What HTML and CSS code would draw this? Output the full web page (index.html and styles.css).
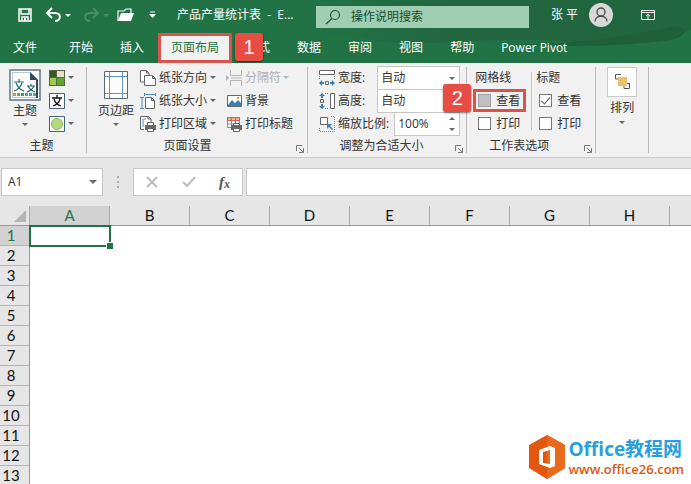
FILE: index.html
```html
<!DOCTYPE html>
<html lang="zh-CN">
<head>
  <meta charset="UTF-8">
  <meta name="viewport" content="width=device-width, initial-scale=1.0">
  <title>产品产量统计表 - Excel</title>
  <link rel="stylesheet" href="styles.css">
</head>
<body>
  <header class="app-header">
    <svg class="swirl" viewBox="0 0 400 63" preserveAspectRatio="none" aria-hidden="true">
      <defs>
        <linearGradient id="shade" x1="0" x2="1"><stop offset="0" stop-color="#217346"/><stop offset=".4" stop-color="#22663f"/><stop offset="1" stop-color="#22663f"/></linearGradient>
      </defs>
      <path d="M20 0H400V30C350 50 300 42 250 40C180 38 130 48 80 40C20 30 0 38 20 0Z" fill="url(#shade)"/>
      <path d="M180 40C240 50 320 40 380 27C396 24 400 36 380 40C320 48 240 48 180 40Z" fill="#1f6039"/>
    </svg>
    <div class="title-bar">
      <div class="quick-access">
        <button type="button" class="save" aria-label="保存">
          <svg width="16" height="16" viewBox="0 0 16 16"><path d="M2 2h12v12H2zM4 2v5h8V2M5 14v-4h6v4" fill="none" stroke="#fff" stroke-width="1.5"/><path d="M7 11h2v3H7z" fill="#fff"/></svg>
        </button>
        <button type="button" class="undo" aria-label="撤消">
          <svg width="17" height="16" viewBox="0 0 17 16"><path d="M7 1L2 6l5 5M3 6h7c7 0 6 8 0 8" fill="none" stroke="#fff" stroke-width="2"/></svg>
          <i class="caret light"></i>
        </button>
        <button type="button" class="redo" aria-label="恢复" disabled>
          <svg width="17" height="16" viewBox="0 0 17 16"><path d="M10 1l5 5-5 5M14 6H7c-7 0-6 8 0 8" fill="none" stroke="#4c8c68" stroke-width="2"/></svg>
          <i class="caret dim"></i>
        </button>
        <button type="button" class="open" aria-label="打开">
          <svg width="17" height="16" viewBox="0 0 17 16"><path d="M1 14V4h6l2-2h5v4" fill="none" stroke="#fff" stroke-width="1.2"/><path d="M1 14L4 6h13l-3 8z" fill="#fff"/></svg>
        </button>
        <button type="button" class="customize" aria-label="自定义快速访问工具栏">
          <svg width="7" height="8" viewBox="0 0 7 8"><path d="M1 1h5" stroke="#fff"/><path d="M0 3h7L3.500 7z" fill="#fff"/></svg>
        </button>
      </div>
      <div class="doc-title">产品产量统计表 &nbsp;- &nbsp;E...</div>
      <label class="search">
        <svg width="16" height="16" viewBox="0 0 16 16"><circle cx="10" cy="6" r="4.500" fill="none" stroke="#1d5c37" stroke-width="1.200"/><path d="M7 9.500L1 15" stroke="#1d5c37" stroke-width="1.300"/></svg>
        <input type="text" placeholder="操作说明搜索" aria-label="操作说明搜索">
      </label>
      <div class="user-name">张 平</div>
      <button type="button" class="avatar" aria-label="帐户">
        <svg width="24" height="24" viewBox="0 0 24 24"><circle cx="12" cy="12" r="12" fill="#d9d9d9"/><circle cx="12" cy="9" r="4" fill="none" stroke="#4a4a4a" stroke-width="1.300"/><path d="M6 18.500c0-7 12-7 12 0" fill="none" stroke="#4a4a4a" stroke-width="1.300"/></svg>
      </button>
      <button type="button" aria-label="功能区显示选项">
        <svg width="14" height="12" viewBox="0 0 14 12"><path d="M.5 1.500h13v9H.5zM.5 3.500h13M7 10V5M5 7l2-2 2 2" fill="none" stroke="#fff"/></svg>
      </button>
    </div>
    <nav class="tabs">
      <a href="#" class="file">文件</a>
      <a href="#">开始</a>
      <a href="#">插入</a>
      <a href="#" class="active">页面布局<span class="badge badge-one">1</span></a>
      <a href="#">公式</a>
      <a href="#">数据</a>
      <a href="#">审阅</a>
      <a href="#">视图</a>
      <a href="#">帮助</a>
      <a href="#">Power Pivot</a>
    </nav>
  </header>

  <div class="ribbon">
    <section class="group themes">
      <div class="group-body">
        <button type="button" class="big">
          <svg width="32" height="32" viewBox="0 0 32 32"><path d="M1 1h30v30H1z" fill="#fff" stroke="#5f7686" stroke-width="1.500"/><path d="M3.500 3.500h18l7 7v18h-25z" fill="#fff" stroke="#bcc5cc"/><path d="M21 3l8 8v18h-2V11h-6z" fill="#35475a"/><path d="M5 13h10M10 10v3M7 14c2 5 5 7 8 8M13 14c-2 5-4 7-8 8M18 17h8M22 15v2M19 17c2 4 4 5 7 6M25 17c-2 4-4 5-7 6" fill="none" stroke="#1f6d63" stroke-width="1.200"/><path d="M4 24h3v3H4z" fill="#c29b42"/><path d="M8 24h3v3H8z" fill="#78a23c"/><path d="M12 24h3v3h-3z" fill="#4d9a48"/><path d="M16 24h3v3h-3zM20 24h3v3h-3zM24 24h3v3h-3z" fill="#49a5a7"/></svg>
          <span>主题</span>
          <i class="caret"></i>
        </button>
        <div class="stack">
          <button type="button" aria-label="颜色"><svg width="16" height="16" viewBox="0 0 16 16"><path d="M0 0h16v16H0z" fill="#56683f"/><path d="M1 1h6v6H1z" fill="#375623"/><path d="M8 1h7v6H8z" fill="#e6dfd0"/><path d="M1 8h6v7H1z" fill="#9bcb4c"/><path d="M8 8h7v7H8z" fill="#5fa52b"/></svg><i class="caret"></i></button>
          <button type="button" aria-label="字体"><svg width="16" height="16" viewBox="0 0 16 16"><path d="M.5.5h15v15H.5z" fill="#fff" stroke="#44617a"/><path d="M3 5h10M8 2v3M5 6c1 4 4 6 7 7M11 6c-1 4-4 6-7 7" fill="none" stroke="#111" stroke-width="1.300"/></svg><i class="caret"></i></button>
          <button type="button" aria-label="效果"><svg width="16" height="16" viewBox="0 0 16 16"><path d="M.5.5h15v15H.5z" fill="#fff" stroke="#44617a"/><circle cx="8" cy="8" r="5.500" fill="#b4d884" stroke="#8cba5a"/></svg><i class="caret"></i></button>
        </div>
      </div>
      <h2>主题</h2>
    </section>

    <section class="group page-setup">
      <div class="group-body">
        <button type="button" class="big">
          <svg width="24" height="32" viewBox="0 0 24 32"><path d="M.5 2.500h23v27H.5z" fill="#fff" stroke="#5a6670"/><path d="M5.500 3v26M18.500 3v26M1 7.500h22M1 24.500h22" stroke="#5b97cd"/></svg>
          <span>页边距</span>
          <i class="caret"></i>
        </button>
        <div class="stack">
          <button type="button"><svg width="16" height="16" viewBox="0 0 16 16"><path d="M6 12H.5V.5h6L9 3v2M6.500.5V3H9" fill="#fff" stroke="#666"/><path d="M4.500 5.500h8l3 3v7h-11zM12.500 5.500v3h3" fill="#fff" stroke="#666"/></svg><span>纸张方向</span><i class="caret"></i></button>
          <button type="button"><svg width="16" height="16" viewBox="0 0 16 16"><path d="M5.500 4.500h6l3 3v8h-9zM11.500 4.500v3h3" fill="#fff" stroke="#666"/><path d="M2 4v11M0 4.500h4M0 15.500h4M5 1.500h10M4.500 0v3M15.500 0v3" stroke="#4a8ac4"/></svg><span>纸张大小</span><i class="caret"></i></button>
          <button type="button"><svg width="16" height="16" viewBox="0 0 16 16"><path d="M4 13.500H.5V.5h8L11 3v3M8 .5V3h3" fill="#fff" stroke="#666"/><path d="M3 3v8M3.500 3H6" stroke="#4a8ac4"/><path d="M5 9h11v5H5z" fill="#666"/><path d="M7.500 6.500h6v3h-6zM7.500 12.500h6v3h-6z" fill="#fff" stroke="#666"/></svg><span>打印区域</span><i class="caret"></i></button>
        </div>
        <div class="stack second">
          <button type="button" disabled><svg width="17" height="16" viewBox="0 0 17 16"><path d="M4.500 0v5.500h11V0M4.500 16v-5.500h11V16M5 8h11" fill="none" stroke="#b5b5b5"/><path d="M0 5l3 3-3 3z" fill="#b5b5b5"/></svg><span>分隔符</span><i class="caret dim"></i></button>
          <button type="button"><svg width="17" height="16" viewBox="0 0 17 16"><path d="M1.500 2.500h14v11h-14z" fill="#fff" stroke="#666"/><path d="M2 12l4-5 3 3 3-3 3 3v3H2z" fill="#3f7fae"/><path d="M11 4h2v2h-2z" fill="#e5a44a"/></svg><span>背景</span></button>
          <button type="button"><svg width="17" height="16" viewBox="0 0 17 16"><path d="M1.500 1.500h12v10h-12zM5.500 2v9M9.500 2v9M2 8h11" fill="#fff" stroke="#888"/><path d="M1 1h13v4H1z" fill="#d2624c"/><path d="M2 3h3M6 3h3M10 3h3" stroke="#fff"/><path d="M5 9h11v5H5z" fill="#666"/><path d="M7.500 7.500h6v2h-6zM7.500 12.500h6v3h-6z" fill="#fff" stroke="#666"/></svg><span>打印标题</span></button>
        </div>
      </div>
      <h2>页面设置</h2>
      <button type="button" class="launcher" aria-label="页面设置选项"><svg width="8" height="8" viewBox="0 0 8 8"><path d="M.5 6V.5H6M3 3l4 4M7.500 3v4.500H3" fill="none" stroke="#777"/></svg></button>
    </section>

    <section class="group scale">
      <div class="group-body">
        <div class="stack">
          <div class="field">
            <svg width="16" height="16" viewBox="0 0 16 16"><path d="M.5.5h15v4H.5z" fill="#fff" stroke="#666"/><path d="M.5 6v4M15.500 6v4" stroke="#888" stroke-dasharray="1 1"/><path d="M0 13l3-3v2h2v2H3v2zM16 13l-3-3v2h-2v2h2v2z" fill="#3f7fae"/><path d="M6.500 11.500h3v3h-3z" fill="#fff" stroke="#666"/></svg>
            <label for="width">宽度:</label>
            <span class="combo"><select id="width"><option>自动</option></select><i class="caret"></i></span>
          </div>
          <div class="field">
            <svg width="16" height="16" viewBox="0 0 16 16"><path d="M11.500.5h4v15h-4z" fill="#fff" stroke="#666"/><path d="M6 .5h4M6 15.500h4" stroke="#888" stroke-dasharray="1 1"/><path d="M3 0l3 3H4v2H2V3H0zM3 16l3-3H4v-2H2v2H0z" fill="#3f7fae"/><path d="M1.500 6.500h3v3h-3z" fill="#fff" stroke="#666"/></svg>
            <label for="height">高度:</label>
            <span class="combo"><select id="height"><option>自动</option></select><i class="caret"></i></span>
          </div>
          <div class="field">
            <svg width="16" height="16" viewBox="0 0 16 16"><path d="M1.500 1.500h7v7h-7z" fill="#fff" stroke="#666"/><path d="M12 .5h3.500v15H.5V11" fill="none" stroke="#888" stroke-dasharray="1 1"/><path d="M8 8h5l-2 2 3 3-1 1-3-3-2 2z" fill="#3f7fae"/></svg>
            <label for="zoom">缩放比例:</label>
            <span class="spin"><input id="zoom" type="text" value="100%"><i class="caret up"></i><i class="caret"></i></span>
          </div>
        </div>
      </div>
      <h2>调整为合适大小</h2>
      <button type="button" class="launcher" aria-label="调整选项"><svg width="8" height="8" viewBox="0 0 8 8"><path d="M.5 6V.5H6M3 3l4 4M7.500 3v4.500H3" fill="none" stroke="#777"/></svg></button>
    </section>

    <section class="group sheet-options">
      <div class="group-body">
        <div class="stack">
          <h3>网格线</h3>
          <div class="marked">
            <label class="check"><input type="checkbox" class="pressed">查看</label>
            <span class="badge badge-two">2</span>
          </div>
          <label class="check"><input type="checkbox">打印</label>
        </div>
        <div class="stack headings">
          <h3>标题</h3>
          <label class="check"><input type="checkbox" checked>查看</label>
          <label class="check"><input type="checkbox">打印</label>
        </div>
      </div>
      <h2>工作表选项</h2>
      <button type="button" class="launcher" aria-label="工作表选项"><svg width="8" height="8" viewBox="0 0 8 8"><path d="M.5 6V.5H6M3 3l4 4M7.500 3v4.500H3" fill="none" stroke="#777"/></svg></button>
    </section>

    <section class="group arrange">
      <button type="button" class="big">
        <svg width="30" height="30" viewBox="0 0 30 30"><path d="M.5.5h29v29H.5z" fill="#fff" stroke="#c9c9c9"/><path d="M8.500 12V7.500H14M8.500 12H11M22.500 16v5.500H17M20 16.500h2.500M17 19v2.500" fill="none" stroke="#555"/><path d="M11 10h9v9h-9z" fill="#ecc069"/></svg>
        <span>排列</span>
        <i class="caret"></i>
      </button>
    </section>
  </div>

  <div class="formula-bar">
    <div class="name-box">
      <input type="text" value="A1" aria-label="名称框">
      <i class="caret"></i>
    </div>
    <svg class="grip" width="3" height="12" viewBox="0 0 3 12"><path d="M0 0h2v2H0zM0 5h2v2H0zM0 10h2v2H0z" fill="#aaa"/></svg>
    <div class="formula-buttons">
      <button type="button" aria-label="取消"><svg width="12" height="12" viewBox="0 0 12 12"><path d="M1 1l10 10M11 1L1 11" stroke="#bdbdbd" stroke-width="2"/></svg></button>
      <button type="button" aria-label="输入"><svg width="14" height="12" viewBox="0 0 14 12"><path d="M1 6l4 4 8-9" fill="none" stroke="#bdbdbd" stroke-width="2"/></svg></button>
      <button type="button" class="fx">f<small>x</small></button>
    </div>
    <input type="text" class="formula" aria-label="编辑栏">
  </div>

  <main class="sheet">
    <table>
      <colgroup>
        <col class="row-col"><col class="data-col"><col class="data-col"><col class="data-col"><col class="data-col"><col class="data-col"><col class="data-col"><col class="data-col"><col class="data-col"><col>
      </colgroup>
      <thead>
        <tr>
          <th class="corner"><svg width="12" height="12" viewBox="0 0 12 12"><path d="M12 0v12H0z" fill="#b4b4b4"/></svg></th>
          <th class="selected">A</th><th>B</th><th>C</th><th>D</th><th>E</th><th>F</th><th>G</th><th>H</th><th class="last"></th>
        </tr>
      </thead>
      <tbody>
        <tr><th class="selected">1</th><td class="cell-active"></td><td colspan="8"></td></tr>
        <tr><th>2</th><td colspan="9"></td></tr>
        <tr><th>3</th><td colspan="9"></td></tr>
        <tr><th>4</th><td colspan="9"></td></tr>
        <tr><th>5</th><td colspan="9"></td></tr>
        <tr><th>6</th><td colspan="9"></td></tr>
        <tr><th>7</th><td colspan="9"></td></tr>
        <tr><th>8</th><td colspan="9"></td></tr>
        <tr><th>9</th><td colspan="9"></td></tr>
        <tr><th>10</th><td colspan="9"></td></tr>
        <tr><th>11</th><td colspan="9"></td></tr>
        <tr><th>12</th><td colspan="9"></td></tr>
        <tr><th>13</th><td colspan="9"></td></tr>
      </tbody>
    </table>
  </main>

  <div class="watermark">
    <svg width="36" height="44" viewBox="0 0 36 44"><path d="M18 0l18 10v23L18 44 0 33V10z" fill="#e2560d"/><path d="M18 0l18 10v23L18 44z" fill="#ea6a1c"/><path d="M10 15l11-4 5 2v18l-5 2-11-4zM14 17v11l7 1V15z" fill="#fff" fill-rule="evenodd"/></svg>
    <div>
      <strong>Office教程网</strong>
      <a href="#">www.office26.com</a>
    </div>
  </div>
</body>
</html>
```
FILE: styles.css
```css
* {
  box-sizing: border-box;
}
body {
  margin: 0;
  height: 100vh;
  display: flex;
  flex-direction: column;
  overflow: hidden;
  position: relative;
  background-color: #fff;
  color: #333;
  font: 12px/16px "Open Sans", "Noto Sans CJK SC", sans-serif;
}
button, input, select {
  font: inherit;
  color: inherit;
  margin: 0;
  padding: 0;
  border: none;
  border-radius: 0;
  background: none;
}
button {
  display: flex;
  align-items: center;
}
svg {
  display: block;
  flex: none;
}
h2, h3 {
  margin: 0;
  font-size: 12px;
  font-weight: normal;
}
.caret {
  flex: none;
  border: 3px solid transparent;
  border-top-color: #666;
  border-bottom: none;
}
.caret.light {
  border-top-color: #fff;
}
.caret.dim {
  border-top-color: #b5b5b5;
}
.caret.up {
  border-top: none;
  border-bottom: 3px solid #666;
}

/* title bar and tabs */
.app-header {
  position: relative;
  flex: none;
  background-color: #217346;
  color: #fff;
}
.swirl {
  position: absolute;
  right: 0;
  top: 0;
  width: 58%;
  height: 100%;
}
.title-bar {
  position: relative;
  display: flex;
  align-items: center;
  height: 33px;
  padding: 0 36px 3px 17px;
}
.quick-access {
  display: flex;
  align-items: center;
  margin-right: 21px;
}
.quick-access button {
  gap: 3px;
}
.save, .undo {
  margin-right: 12px;
}
.redo {
  margin-right: 8px;
}
.redo .caret {
  border-top-color: #4c8c68;
}
.open {
  margin-right: 15px;
}
.doc-title {
  width: 139px;
  white-space: nowrap;
}
.search {
  flex: 1;
  display: flex;
  align-items: center;
  gap: 10px;
  height: 22px;
  margin: 3px 22px 0 0;
  padding-left: 9px;
  background-color: #9fceb2;
}
.search input {
  flex: 1;
  min-width: 0;
}
.search input::placeholder {
  color: #174d2e;
  opacity: 1;
}
.avatar {
  margin: 0 28px 0 11px;
}
.tabs {
  position: relative;
  display: flex;
  align-items: center;
  gap: 27px;
  height: 30px;
  padding-left: 13px;
}
.tabs a {
  color: #fff;
  text-decoration: none;
  white-space: nowrap;
}
.tabs .file {
  margin-right: 5px;
}
.tabs .active {
  position: relative;
  height: 30px;
  margin: 0 -13px;
  padding: 4px 10px;
  border: 3px solid #d9534a;
  background-color: #f1f1f1;
  color: #217346;
}
.badge {
  position: absolute;
  z-index: 2;
  width: 28px;
  height: 28px;
  border-radius: 3px;
  background-color: #e84c42;
  box-shadow: 0 1px 2px rgba(0, 0, 0, 0.5);
  color: #fff;
  font: 20px/28px "Liberation Sans", sans-serif;
  text-align: center;
}
.badge-one {
  left: 74px;
  top: -3px;
}
.badge-two {
  right: 55px;
  top: -5px;
}

/* ribbon */
.ribbon {
  flex: none;
  display: flex;
  background-color: #f1f1f1;
  border-bottom: 1px solid #c8c8c8;
}
.group {
  position: relative;
  padding: 3px 0 2px;
}
.group::after {
  content: "";
  position: absolute;
  right: 0;
  top: 4px;
  bottom: 4px;
  border-right: 1px solid #b8b8b8;
}
.group-body {
  display: flex;
  height: 69px;
}
.group h2 {
  height: 20px;
  padding-right: 16px;
  line-height: 22px;
  text-align: center;
}
.group.themes h2 {
  padding-right: 0;
}
.big {
  flex-direction: column;
  padding-top: 3px;
}
.big span {
  margin: 2px 0 4px;
}
.stack {
  display: flex;
  flex-direction: column;
}
.stack button, .field, .check, .stack h3 {
  display: flex;
  align-items: center;
  height: 23px;
  white-space: nowrap;
}
.stack button {
  gap: 3px;
}
button:disabled {
  color: #b0b0b0;
}
.launcher {
  position: absolute;
  right: 4px;
  bottom: 4px;
}
.themes {
  padding-left: 9px;
  padding-right: 13px;
}
.themes .group-body {
  gap: 8px;
}
.page-setup {
  padding-left: 11px;
  padding-right: 15px;
}
.page-setup .group-body {
  gap: 6px;
}
.page-setup .second {
  margin-left: 4px;
}
.page-setup .second button {
  gap: 2px;
}
.scale {
  padding-left: 11px;
  padding-right: 7px;
}
.field label {
  margin-left: 3px;
}
.combo, .spin {
  position: relative;
  margin-left: auto;
  height: 24px;
  border: 1px solid #c6c6c6;
  background-color: #fff;
}
.combo {
  width: 83px;
}
.spin {
  width: 66px;
  margin-left: 5px;
}
.combo select, .spin input {
  appearance: none;
  width: 100%;
  height: 100%;
  padding-left: 3px;
}
.combo .caret, .spin .caret {
  position: absolute;
  right: 4px;
  top: 10px;
}
.spin .up {
  top: 4px;
}
.spin .caret:last-child {
  top: 15px;
}
.sheet-options {
  padding-left: 6px;
  padding-right: 15px;
}
.stack h3 {
  padding-left: 2px;
}
.marked {
  position: relative;
  outline: 3px solid #d9534a;
  outline-offset: -3px;
  width: 53px;
}
.check {
  gap: 5px;
  padding-left: 5px;
}
.check input {
  appearance: none;
  display: grid;
  place-items: center;
  width: 13px;
  height: 13px;
  border: 1px solid #777;
  background-color: #fff;
}
.check .pressed {
  background-color: #c0c0c0;
  border-color: #a0a0a0;
}
.check input:checked::after {
  content: "";
  width: 4px;
  height: 8px;
  margin-bottom: 2px;
  border: solid #555;
  border-width: 0 1px 1px 0;
  transform: rotate(40deg);
}
.headings {
  margin-left: 5px;
  padding-left: 3px;
  background: linear-gradient(#c8c8c8, #c8c8c8) no-repeat left center / 1px 58px;
}
.arrange {
  padding: 1px 12px 0 11px;
}
.arrange span {
  margin: 3px 0 5px;
}

/* formula bar */
.formula-bar {
  flex: none;
  display: flex;
  align-items: center;
  padding: 10px 0;
  background-color: #e6e6e6;
}
.name-box, .formula-buttons, .formula {
  height: 28px;
  border: 1px solid #c6c6c6;
  background-color: #fff;
}
.name-box {
  display: flex;
  align-items: center;
  width: 102px;
  margin-left: 1px;
  padding: 0 5px 0 6px;
}
.name-box input {
  flex: 1;
  min-width: 0;
}
.name-box .caret {
  border-width: 4px 4px 0;
}
.grip {
  margin: 0 13px 0 14px;
}
.formula-buttons {
  display: flex;
  align-items: center;
  justify-content: space-between;
  width: 110px;
  padding: 0 12px;
}
.fx {
  color: #555;
  font: italic bold 15px/20px "Liberation Serif", serif;
}
.fx small {
  font-size: 12px;
  padding-top: 3px;
}
.formula {
  flex: 1;
  min-width: 0;
  margin-left: 3px;
  padding: 0 6px;
  border-right: none;
}

/* sheet */
.sheet {
  flex: 1;
  min-height: 0;
  overflow: hidden;
}
table {
  width: 100%;
  table-layout: fixed;
  border-collapse: separate;
  border-spacing: 0;
}
.row-col {
  width: 30px;
}
.data-col {
  width: 80px;
}
th {
  height: 20px;
  padding: 0;
  background-color: #e6e6e6;
  color: #111;
  font: 15px/19px Lato, sans-serif;
}
thead th {
  border-right: 1px solid #ababab;
  border-bottom: 1px solid #999;
}
thead .last {
  border-right: none;
}
thead .corner {
  padding: 4px 4px 3px 14px;
}
tbody th {
  padding-right: 7px;
  border-right: 1px solid #999;
  border-bottom: 1px solid #b4b4b4;
}
th.selected {
  background-color: #d2d2d2;
  color: #217346;
}
td {
  padding: 0;
}
.cell-active {
  position: relative;
  outline: 2px solid #217346;
  outline-offset: -1px;
}
.cell-active::after {
  content: "";
  position: absolute;
  right: -3px;
  bottom: -3px;
  width: 6px;
  height: 6px;
  border: solid #fff;
  border-width: 1px 0 0 1px;
  background-color: #217346;
}

.watermark {
  position: absolute;
  right: 7px;
  bottom: 5px;
  display: flex;
  align-items: center;
  gap: 4px;
}
.watermark strong {
  display: block;
  color: #2a9fe0;
  font-size: 19px;
  line-height: 24px;
}
.watermark a {
  display: block;
  color: #e2560d;
  font-size: 13px;
  font-weight: 600;
  line-height: 16px;
  text-decoration: none;
}
```
